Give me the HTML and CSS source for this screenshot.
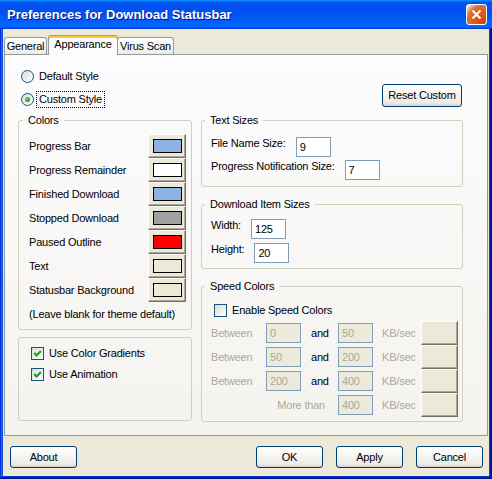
FILE: index.html
```html
<!DOCTYPE html>
<html lang="en">

<head>
    <meta charset="utf-8">
    <title>Preferences for Download Statusbar</title>
    <link rel="stylesheet" href="styles.css">
</head>

<body>

    <div class="window">
        <div class="titlebar">
            <span class="title">Preferences for Download Statusbar</span>
            <button class="close" aria-label="Close">
                <svg width="11" height="11" viewBox="0 0 11 11">
                    <path d="M1.5 1.5 L9.5 9.5 M9.5 1.5 L1.5 9.5" stroke="#fff" stroke-width="2.2" fill="none" />
                </svg>
            </button>
        </div>

        <div class="client">
            <div class="tabs">
                <div class="tab tab-general">General</div>
                <div class="tab tab-appearance selected">Appearance</div>
                <div class="tab tab-virus">Virus Scan</div>
            </div>

            <div class="panel">
                <div class="style-row">
                    <div class="radio-list">
                        <label class="radio"><span class="radio-box"></span><span class="radio-text">Default Style</span></label>
                        <label class="radio checked"><span class="radio-box"></span><span class="radio-text focus">Custom Style</span></label>
                    </div>
                    <button class="btn btn-reset">Reset Custom</button>
                </div>

                <div class="columns">
                    <div class="col-left">
                        <fieldset class="group group-colors">
                            <legend>Colors</legend>
                            <div class="color-row"><span>Progress Bar</span><button class="swatch"><span class="chip chip-blue"></span></button></div>
                            <div class="color-row"><span>Progress Remainder</span><button class="swatch"><span class="chip chip-white"></span></button></div>
                            <div class="color-row"><span>Finished Download</span><button class="swatch"><span class="chip chip-blue"></span></button></div>
                            <div class="color-row"><span>Stopped Download</span><button class="swatch"><span class="chip chip-gray"></span></button></div>
                            <div class="color-row"><span>Paused Outline</span><button class="swatch"><span class="chip chip-red"></span></button></div>
                            <div class="color-row"><span>Text</span><button class="swatch"><span class="chip chip-beige"></span></button></div>
                            <div class="color-row"><span>Statusbar Background</span><button class="swatch"><span class="chip chip-beige"></span></button></div>
                            <div class="note">(Leave blank for theme default)</div>
                        </fieldset>

                        <fieldset class="group group-options">
                            <label class="check">
                                <span class="check-box">
                                    <svg width="11" height="11" viewBox="0 0 11 11"><path d="M2.2 5 L4.6 7.4 L8.9 3" stroke="#21a121" stroke-width="2.2" fill="none" /></svg>
                                </span>Use Color Gradients
                            </label>
                            <label class="check">
                                <span class="check-box">
                                    <svg width="11" height="11" viewBox="0 0 11 11"><path d="M2.2 5 L4.6 7.4 L8.9 3" stroke="#21a121" stroke-width="2.2" fill="none" /></svg>
                                </span>Use Animation
                            </label>
                        </fieldset>
                    </div>

                    <div class="col-right">
                        <fieldset class="group group-text">
                            <legend>Text Sizes</legend>
                            <div class="field-row"><span>File Name Size:</span><input class="input" type="text" value="9"></div>
                            <div class="field-row"><span>Progress Notification Size:</span><input class="input" type="text" value="7"></div>
                        </fieldset>

                        <fieldset class="group group-item">
                            <legend>Download Item Sizes</legend>
                            <div class="field-row"><span>Width:</span><input class="input" type="text" value="125"></div>
                            <div class="field-row"><span>Height:</span><input class="input" type="text" value="20"></div>
                        </fieldset>

                        <fieldset class="group group-speed">
                            <legend>Speed Colors</legend>
                            <label class="check speed-check"><span class="check-box"></span>Enable Speed Colors</label>
                            <div class="speed-grid">
                                <span class="off">Between</span>
                                <input class="input" type="text" value="0" disabled>
                                <span class="and">and</span>
                                <input class="input" type="text" value="50" disabled>
                                <span class="off unit">KB/sec</span>
                                <button class="swatch empty"></button>

                                <span class="off">Between</span>
                                <input class="input" type="text" value="50" disabled>
                                <span class="and">and</span>
                                <input class="input" type="text" value="200" disabled>
                                <span class="off unit">KB/sec</span>
                                <button class="swatch empty"></button>

                                <span class="off">Between</span>
                                <input class="input" type="text" value="200" disabled>
                                <span class="and">and</span>
                                <input class="input" type="text" value="400" disabled>
                                <span class="off unit">KB/sec</span>
                                <button class="swatch empty"></button>

                                <span class="off more">More than</span>
                                <input class="input" type="text" value="400" disabled>
                                <span class="off unit">KB/sec</span>
                                <button class="swatch empty"></button>
                            </div>
                        </fieldset>
                    </div>
                </div>
            </div>

            <div class="footer">
                <button class="btn btn-dialog">About</button>
                <div class="footer-right">
                    <button class="btn btn-dialog">OK</button>
                    <button class="btn btn-dialog">Apply</button>
                    <button class="btn btn-dialog">Cancel</button>
                </div>
            </div>
        </div>
    </div>

</body>

</html>
```

FILE: styles.css
```css
* {
    box-sizing: border-box;
}

html,
body {
    margin: 0;
    width: 492px;
    height: 479px;
    overflow: hidden;
}

body {
    font: 11px/13px "Liberation Sans", Arial, sans-serif;
    letter-spacing: -0.2px;
    color: #000;
    background-color: #fff;
}

button,
input {
    font: inherit;
    letter-spacing: inherit;
    color: #000;
    margin: 0;
}

.window {
    width: 492px;
    height: 479px;
    display: flex;
    flex-direction: column;
    background-color: #0055ea;
    box-shadow: inset -1px -1px #00138c, inset 1px 1px #0831d9, inset -2px -2px #001ea0, inset 2px 2px #166aee, inset -3px -3px #003bda, inset 3px 3px #0855dd;
}

/* title bar */

.titlebar {
    height: 29px;
    flex: none;
    display: flex;
    align-items: center;
    justify-content: space-between;
    padding: 0 5px 0 7px;
    background: linear-gradient(180deg, #0997ff, #0053ee 8%, #0050ee 40%, #06f 88%, #06f 93%, #005bff 95%, #003dd7 96%, #003dd7);
}

.title {
    color: #fff;
    font: bold 13px/29px "Liberation Sans", Arial, sans-serif;
    letter-spacing: 0;
    text-shadow: 1px 1px #0f1089;
}

.close {
    width: 21px;
    height: 21px;
    padding: 0;
    border: 1px solid #fff;
    border-radius: 3px;
    background: radial-gradient(circle at 90% 90%, #cc4600 0, #dc6527 55%, #cd7546 70%, #ffccb2 90%, #fff 100%);
    display: flex;
    align-items: center;
    justify-content: center;
}

/* client area */

.client {
    flex: 1;
    margin: 0 3px 3px;
    padding: 6px 0 0 1px;
    background-color: #ece9d8;
    display: flex;
    flex-direction: column;
}

.tabs {
    height: 19px;
    display: flex;
    align-items: flex-end;
}

.tab {
    height: 17px;
    padding-top: 2px;
    text-align: center;
    border: 1px solid #919b9c;
    border-bottom: 0;
    border-radius: 3px 3px 0 0;
    background: linear-gradient(#fefefe, #f4f3ee 70%, #eae9e2);
}

.tab-general {
    width: 43px;
    margin-right: 1px;
}

.tab-appearance {
    width: 70px;
}

.tab-virus {
    width: 57px;
    margin-left: -1px;
}

.tab.selected {
    height: 20px;
    margin-bottom: -1px;
    border-top: 1px solid #e68b2c;
    box-shadow: inset 0 2px #ffc83c;
    background: #fcfcfe;
    position: relative;
    z-index: 1;
}

.panel {
    height: 382px;
    flex: none;
    margin-right: 1px;
    padding: 13px 0 0 13px;
    border: 1px solid #919b9c;
    background: linear-gradient(#fcfcfe, #f4f3ee);
}

/* style choice */

.style-row {
    width: 445px;
    display: flex;
    justify-content: space-between;
    align-items: flex-end;
}

.radio-list {
    display: flex;
    flex-direction: column;
    gap: 6px;
    padding-left: 3px;
}

.radio {
    height: 17px;
    display: flex;
    align-items: center;
}

.radio-box {
    width: 13px;
    height: 13px;
    margin-right: 2px;
    border: 1px solid #1c5180;
    border-radius: 50%;
    background: linear-gradient(135deg, #dcdcd7, #fff);
    display: flex;
    align-items: center;
    justify-content: center;
}

.radio.checked .radio-box::after {
    content: "";
    width: 5px;
    height: 5px;
    border-radius: 50%;
    background: radial-gradient(circle at 35% 35%, #6be36b, #21a121 60%, #1a8a1a);
}

.radio-text {
    padding: 1px 2px;
    border: 1px dotted transparent;
}

.radio-text.focus {
    border-color: #000;
}

.btn {
    height: 22px;
    padding: 0;
    border: 1px solid #003c74;
    border-radius: 3px;
    background: linear-gradient(180deg, #fff, #ecebe6 86%, #d6d0c5);
}

.btn-reset {
    width: 80px;
    height: 23px;
    margin: 0 1px 1px 0;
}

.btn-dialog {
    width: 67px;
}

/* group boxes */

.columns {
    display: flex;
    gap: 9px;
    margin-top: 6px;
}

.col-left {
    width: 174px;
    display: flex;
    flex-direction: column;
}

.col-right {
    width: 262px;
    display: flex;
    flex-direction: column;
}

.group {
    margin: 0;
    min-width: 0;
    border: 1px solid #d0d0bf;
    border-radius: 3px;
}

.group legend {
    padding: 0 5px;
    margin-left: -6px;
    line-height: 13px;
}

.group-colors {
    padding: 7px 5px 8px 10px;
}

.color-row {
    height: 24px;
    display: flex;
    align-items: center;
    justify-content: space-between;
}

.swatch {
    width: 38px;
    height: 24px;
    padding: 4px 3px 4px 4px;
    border: 1px solid;
    border-color: #fff #716f64 #716f64 #fff;
    box-shadow: inset -1px -1px #aca899;
    background-color: #ece9d8;
    display: block;
}

.swatch.empty {
    width: 37px;
}

.chip {
    display: block;
    width: 29px;
    height: 14px;
    border: 1px solid #000;
}

.chip-blue {
    background-color: #8db2e3;
}

.chip-white {
    background-color: #fff;
}

.chip-gray {
    background-color: #a0a0a0;
}

.chip-red {
    background-color: #ff0000;
}

.chip-beige {
    background-color: #ece9d8;
}

.note {
    margin-top: 6px;
}

.group-options {
    height: 84px;
    margin-top: 7px;
    padding: 9px 0 0 12px;
    display: flex;
    flex-direction: column;
    gap: 8px;
}

.check {
    height: 13px;
    display: flex;
    align-items: center;
}

.check-box {
    width: 13px;
    height: 13px;
    margin-right: 5px;
    border: 1px solid #1c5180;
    background: linear-gradient(135deg, #dcdcd7, #fff);
}

.check-box svg {
    display: block;
}

/* right column */

.group-text {
    padding: 10px 0 6px 9px;
    display: flex;
    flex-direction: column;
    gap: 3px;
}

.group-item {
    margin-top: 11px;
    padding: 8px 0 5px 9px;
    display: flex;
    flex-direction: column;
    gap: 4px;
}

.field-row {
    display: flex;
    align-items: flex-start;
}

.field-row .input {
    margin-left: 10px;
}

.input {
    width: 35px;
    height: 20px;
    padding: 0 3px;
    border: 1px solid #7f9db9;
    border-radius: 0;
    background-color: #fff;
    outline: none;
}

.input:disabled {
    background-color: #ebeadb;
    color: #aca899;
}

.group-speed {
    margin-top: 11px;
    padding: 11px 3px 4px 9px;
}

.speed-check {
    margin-left: 3px;
}

.speed-grid {
    margin-top: 4px;
    display: grid;
    grid-template-columns: 55px 35px 37px 35px 48px 37px;
    grid-auto-rows: 24px;
    align-items: center;
}

.off {
    color: #aca899;
}

.and {
    padding-left: 10px;
}

.unit {
    padding-left: 9px;
}

.more {
    grid-column: 1 / 4;
    justify-self: end;
    margin-right: 13px;
}

/* buttons at the bottom */

.footer {
    flex: 1;
    display: flex;
    align-items: flex-start;
    padding: 10px 6px 0;
}

.footer-right {
    margin-left: auto;
    display: flex;
    gap: 13px;
}
```
